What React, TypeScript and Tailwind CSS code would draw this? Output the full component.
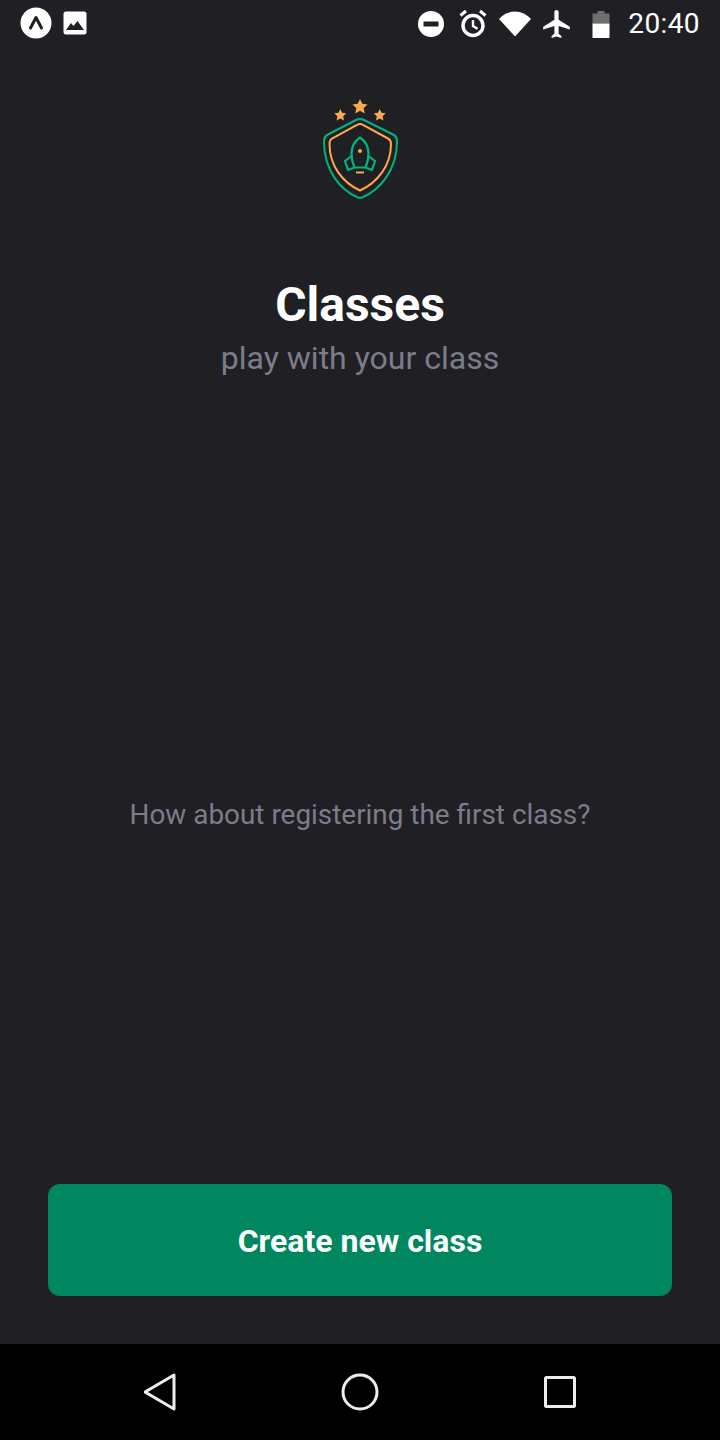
import React from 'react'

function StatusBar() {
  return (
    <div className="flex h-12 shrink-0 items-center justify-between pl-5 pr-5">
      <div className="flex items-center gap-[11px]">
        <svg width="32" height="32" viewBox="0 0 32 32" className="-translate-y-px">
          <circle cx="16" cy="16" r="15.5" fill="#fff" />
          <path d="M10.5 21 L16 10.5 L21.5 21" fill="none" stroke="#202024" strokeWidth="3" strokeLinecap="round" strokeLinejoin="round" />
        </svg>
        <svg width="24" height="24" viewBox="0 0 24 24" className="-translate-y-px">
          <rect x="0.5" y="0.5" width="23" height="23" rx="2.5" fill="#fff" />
          <path d="M3 19 L8 12 L10.5 15 L14.5 10 L21 19 Z" fill="#202024" />
        </svg>
      </div>
      <div className="flex items-center">
        <svg width="26" height="26" viewBox="0 0 26 26">
          <circle cx="13" cy="13" r="13" fill="#fff" />
          <rect x="5.5" y="10.5" width="15" height="5" fill="#202024" />
        </svg>
        <svg width="30" height="30" viewBox="0 0 30 30" className="ml-[14px]">
          <circle cx="15" cy="16.5" r="10" fill="none" stroke="#fff" strokeWidth="3.4" />
          <path d="M15 11 V17 L19.5 19.8" fill="none" stroke="#fff" strokeWidth="2.4" />
          <path d="M2.5 6.5 L8 2 M27.5 6.5 L22 2" fill="none" stroke="#fff" strokeWidth="3" />
        </svg>
        <svg width="32" height="26" viewBox="0 0 32 26" className="ml-[11px]">
          <path d="M16 25.5 L0 8 C4 3.5 10 0.5 16 0.5 C22 0.5 28 3.5 32 8 Z" fill="#fff" />
        </svg>
        <svg width="27" height="28" viewBox="2 2 19 20" className="ml-[12px]" fill="#fff">
          <path d="M21 16v-2l-8-5V3.5c0-.83-.67-1.5-1.5-1.5S10 2.67 10 3.5V9l-8 5v2l8-2.5V19l-2 1.5V22l3.5-1 3.5 1v-1.5L13 19v-5.5l8 2.5z" />
        </svg>
        <svg width="18" height="27" viewBox="0 0 18 27" className="ml-[22px]">
          <path d="M5.5 0 H12.5 V2.5 H17.5 V12.5 H0.5 V2.5 H5.5 Z" fill="#6e6e70" />
          <rect x="0.5" y="12.5" width="17" height="14.5" fill="#fff" />
        </svg>
        <span className="ml-[18px] text-[28px] font-normal leading-none tracking-[0.4px] text-white">20:40</span>
      </div>
    </div>
  )
}

function Logo() {
  return (
    <svg width="100" height="120" viewBox="0 0 100 120" fill="none">
      <path d="M46 30 Q50 28 54 30 L83 44.5 Q87 46.5 87 51.5 C87 80 70 100 52 107.5 Q50 108.3 48 107.5 C30 100 14 80 14 51.5 Q14 46.5 18 44.5 Z" stroke="#00B37E" strokeWidth="2" />
      <path d="M47 35 Q50 33 53 35 L78 48.5 Q81 50 81 54 C81 76 67 93 50 100.5 C33 93 19.5 76 19.5 54 Q19.5 50 22 48.5 Z" stroke="#FBA94C" strokeWidth="2" />
      <path d="M50 47.5 C44 51.5 41.5 58 41.5 64 C41.5 69 43 74 44.5 77.5 H55.5 C57 74 58.5 69 58.5 64 C58.5 58 56 51.5 50 47.5 Z" stroke="#00B37E" strokeWidth="2.2" strokeLinejoin="round" />
      <path d="M41.5 66 L35 71 L38 80 L44.5 77.5 M58.5 66 L65 71 L62 80 L55.5 77.5" stroke="#00B37E" strokeWidth="2.2" strokeLinejoin="round" />
      <circle cx="50" cy="61" r="2" fill="#FBA94C" />
      <path d="M46 82.5 H54" stroke="#FBA94C" strokeWidth="2" />
      <path d="M50 9 L52.3 13.8 L57.6 14.5 L53.7 18.1 L54.7 23.4 L50 20.8 L45.3 23.4 L46.3 18.1 L42.4 14.5 L47.7 13.8 Z" fill="#FBA94C" />
      <path d="M30.3 19 L32.1 22.8 L36.2 23.3 L33.2 26.2 L34 30.4 L30.3 28.4 L26.6 30.4 L27.4 26.2 L24.4 23.3 L28.5 22.8 Z" fill="#FBA94C" />
      <path d="M69.7 19 L71.5 22.8 L75.6 23.3 L72.6 26.2 L73.4 30.4 L69.7 28.4 L66 30.4 L66.8 26.2 L63.8 23.3 L67.9 22.8 Z" fill="#FBA94C" />
    </svg>
  )
}

function NavBar() {
  return (
    <div className="flex h-24 shrink-0 items-center justify-between bg-black px-[144px]">
      <svg width="32" height="38" viewBox="0 0 32 38" fill="none">
        <path d="M30 2 V36 L1 19 Z" stroke="#eee" strokeWidth="3" strokeLinejoin="round" />
      </svg>
      <svg width="38" height="38" viewBox="0 0 38 38" fill="none">
        <circle cx="19" cy="19" r="17" stroke="#eee" strokeWidth="3" />
      </svg>
      <svg width="32" height="32" viewBox="0 0 32 32" fill="none">
        <rect x="1.5" y="1.5" width="29" height="29" rx="1" stroke="#eee" strokeWidth="3" />
      </svg>
    </div>
  )
}

export default function App() {
  return (
    <main className="flex h-[1440px] w-[720px] flex-col bg-[#202024] font-['Roboto',sans-serif]">
      <StatusBar />
      <div className="flex flex-1 flex-col items-center px-12 pb-12">
        <div className="mt-[42px]">
          <Logo />
        </div>
        <h1 className="mt-[67px] text-[48px] font-bold leading-[56px] text-white">Classes</h1>
        <p className="mt-[5px] text-[32px] leading-[40px] text-[#7C7C8A]">play with your class</p>
        <div className="flex flex-1 items-center justify-center pt-[68px]">
          <p className="text-[27.9px] leading-9 text-[#7C7C8A]">How about registering the first class?</p>
        </div>
        <button className="flex h-28 w-full shrink-0 items-center justify-center rounded-xl bg-[#00875F] pt-[2px] text-[32px] font-bold text-white">
          Create new class
        </button>
      </div>
      <NavBar />
    </main>
  )
}
